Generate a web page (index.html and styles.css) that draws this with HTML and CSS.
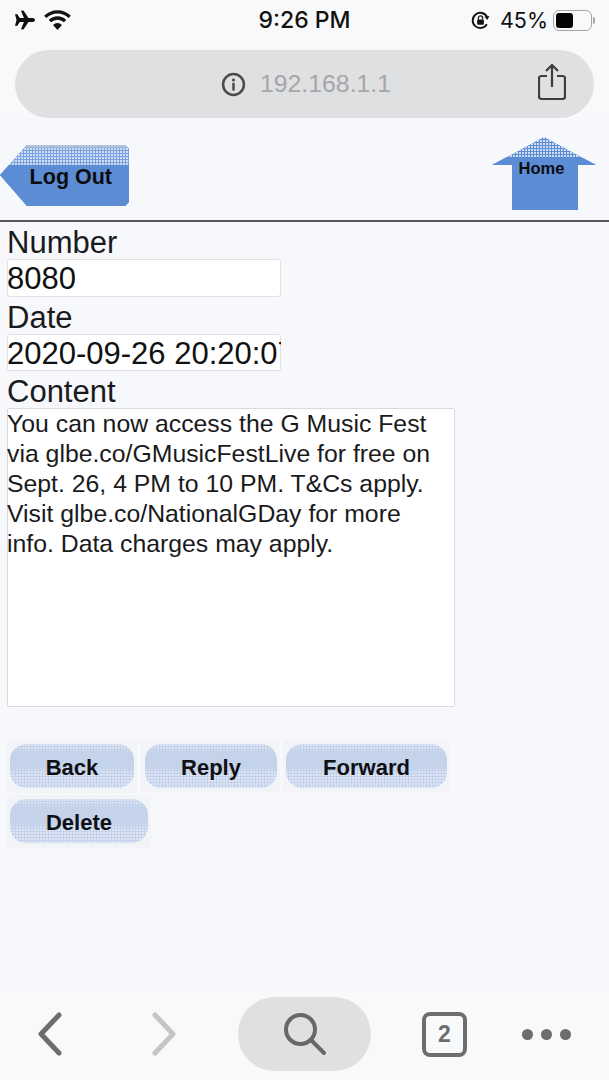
FILE: index.html
```html
<!DOCTYPE html>
<html lang="en">
<head>
<meta charset="utf-8">
<title>Message</title>
<link rel="stylesheet" href="styles.css">
</head>
<body>
<div class="phone">
  <header class="chrome">
    <div class="status">
      <div class="status-left">
        <svg class="ic-plane" viewBox="0 0 20 18"><path d="M1 3.5 L3 3.2 L5.5 7 L9.5 7 L6.6 0.3 L9 0 L13.8 7 L17.5 7 C19.5 7 20 8.4 20 9 C20 9.6 19.5 11 17.5 11 L13.8 11 L9 18 L6.6 17.7 L9.5 11 L5.5 11 L3 14.8 L1 14.5 L2.4 9 Z" fill="#111"/></svg>
        <svg class="ic-wifi" viewBox="0 0 24 18"><path d="M1 6.2 A15.5 15.5 0 0 1 23 6.2" fill="none" stroke="#111" stroke-width="3"/><path d="M5.2 10 A9.6 9.6 0 0 1 18.8 10" fill="none" stroke="#111" stroke-width="3"/><path d="M12 18 L8 13.4 A5.6 5.6 0 0 1 16 13.4 Z" fill="#111"/></svg>
      </div>
      <div class="time">9:26 PM</div>
      <div class="status-right">
        <svg class="ic-lock" viewBox="0 0 18 18"><path d="M15 12.6 A7.2 7.2 0 1 1 15.2 5.6" fill="none" stroke="#111" stroke-width="1.8"/><path d="M12.8 5 L17.6 5 L15.2 8.6 Z" fill="#111"/><rect x="5.8" y="8" width="6.4" height="5" rx="1" fill="#111"/><path d="M7 8 V6.6 A2 2 0 0 1 11 6.6 V8" fill="none" stroke="#111" stroke-width="1.2"/></svg>
        <span class="pct">45%</span>
        <div class="battery"><div class="battery-fill"></div></div>
        <div class="battery-cap"></div>
      </div>
    </div>
    <div class="url">
      <div class="url-center">
        <svg class="ic-info" viewBox="0 0 24 24"><circle cx="12" cy="12" r="10" fill="none" stroke="#4b4b4d" stroke-width="2.4"/><rect x="10.8" y="10.4" width="2.4" height="7.4" fill="#4b4b4d"/><rect x="10.7" y="6.4" width="2.6" height="2.6" fill="#4b4b4d"/></svg>
        <span class="url-text">192.168.1.1</span>
      </div>
      <svg class="ic-share" viewBox="0 0 28 38"><path d="M9 13 H3.5 A2.5 2.5 0 0 0 1 15.5 V33.5 A2.5 2.5 0 0 0 3.5 36 H24.5 A2.5 2.5 0 0 0 27 33.5 V15.5 A2.5 2.5 0 0 0 24.5 13 H19" fill="none" stroke="#3c3c3e" stroke-width="2.2"/><path d="M14 24 V2.5 M8 8 L14 2 L20 8" fill="none" stroke="#3c3c3e" stroke-width="2.2"/></svg>
    </div>
  </header>

  <nav class="topnav">
    <a class="logout"><span>Log Out</span></a>
    <a class="home"><span>Home</span></a>
  </nav>

  <main class="form">
    <div class="label">Number</div>
    <div class="field">8080</div>
    <div class="label">Date</div>
    <div class="field">2020-09-26 20:20:07</div>
    <div class="label">Content</div>
    <div class="textarea">You can now access the G Music Fest via glbe.co/GMusicFestLive for free on Sept. 26, 4 PM to 10 PM. T&amp;Cs apply. Visit glbe.co/NationalGDay for more info. Data charges may apply.</div>
    <div class="actions">
      <div class="cell cell-back"><button class="btn">Back</button></div>
      <div class="cell cell-reply"><button class="btn">Reply</button></div>
      <div class="cell cell-forward"><button class="btn">Forward</button></div>
      <div class="cell cell-delete"><button class="btn">Delete</button></div>
    </div>
  </main>

  <footer class="toolbar">
    <svg class="ic-back" viewBox="0 0 24 44"><path d="M21 3 L3 22 L21 41" fill="none" stroke="#6d6d6f" stroke-width="5" stroke-linecap="round" stroke-linejoin="round"/></svg>
    <svg class="ic-fwd" viewBox="0 0 24 44"><path d="M3 3 L21 22 L3 41" fill="none" stroke="#c4c5c6" stroke-width="5" stroke-linecap="round" stroke-linejoin="round"/></svg>
    <div class="search">
      <svg class="ic-search" viewBox="0 0 44 44"><circle cx="17.5" cy="17.5" r="14.5" fill="none" stroke="#68686a" stroke-width="4"/><path d="M28 28 L41 41" fill="none" stroke="#68686a" stroke-width="4" stroke-linecap="round"/></svg>
    </div>
    <div class="tabs">2</div>
    <div class="more"><i></i><i></i><i></i></div>
  </footer>
</div>
</body>
</html>
```
FILE: styles.css
```css
* { box-sizing: border-box; }
html, body { margin: 0; padding: 0; }
body { font-family: "Liberation Sans", Arial, sans-serif; color: #111; background: #f6f8fc; }
.phone { width: 609px; height: 1080px; display: flex; flex-direction: column; overflow: hidden; }

.chrome { height: 118px; padding: 0 15px; background: #f8f9fa; display: flex; flex-direction: column; flex: none; }
.status { height: 40px; margin: 0 -1px; padding-top: 0; display: grid; grid-template-columns: 1fr auto 1fr; align-items: center; }
.status-left { display: flex; align-items: center; gap: 9px; }
.ic-plane { width: 21px; height: 20px; }
.ic-wifi { width: 27px; height: 20px; }
.time { font-size: 23px; font-weight: 500; font-family: Inter, "Liberation Sans", sans-serif; color: #111; }
.status-right { display: flex; align-items: center; justify-content: flex-end; }
.ic-lock { width: 19px; height: 19px; margin-right: 10px; }
.pct { font-size: 21.5px; font-family: Inter, "Liberation Sans", sans-serif; margin-right: 5px; }
.battery { width: 39px; height: 21px; border: 1.5px solid #a5a5a7; border-radius: 6px; padding: 2px; }
.battery-fill { width: 17px; height: 100%; background: #050505; border-radius: 3px; }
.battery-cap { width: 2px; height: 7px; background: #a5a5a7; margin-left: 1px; border-radius: 0 2px 2px 0; }

.url { margin-top: 10px; height: 68px; border-radius: 34px; background: #dfe0e2; display: flex; align-items: center; position: relative; justify-content: center; padding-left: 3px; }
.url-center { display: flex; align-items: center; gap: 14px; }
.ic-info { width: 25px; height: 25px; }
.url-text { font-size: 24.8px; color: #a5a6a8; }
.ic-share { position: absolute; right: 28px; top: 13px; width: 28px; height: 38px; }

.topnav { height: 104px; border-bottom: 2px solid #58585c; display: flex; justify-content: space-between; align-items: flex-start; padding-right: 13px; flex: none; }
.logout { margin-top: 27px; width: 129px; height: 61px; display: flex; align-items: center; justify-content: flex-end; padding: 3px 17px 0 0; font-size: 21.5px; font-weight: 700; color: #0c0c10;
  clip-path: polygon(27px 0, 125px 0, 129px 4px, 129px 57px, 125px 61px, 27px 61px, 0 30px);
  background-color: #5c8cd4;
  background-image:
    linear-gradient(#b4c2d8 0, #b4c2d8 2px, transparent 3px),
    linear-gradient(transparent 0, transparent 20px, #5c8cd4 20px),
    radial-gradient(circle at 1px 1px, #cfdcf1 0.8px, transparent 1.2px),
    linear-gradient(#7aa2de, #7aa2de);
  background-size: auto, auto, 3px 3px, auto; }
.home { margin-top: 19px; width: 104px; height: 73px; display: flex; justify-content: center; padding: 22px 5px 0 0; font-size: 16.5px; font-weight: 700; color: #0c0c10;
  clip-path: polygon(52px 0, 104px 28px, 86px 28px, 86px 73px, 20px 73px, 20px 28px, 0 28px);
  background-color: #5c8cd4;
  background-image:
    linear-gradient(transparent 0, transparent 21px, #5c8cd4 21px),
    radial-gradient(circle at 1px 1px, #cfdcf1 0.8px, transparent 1.2px);
  background-size: auto, 3px 3px; }

.form { flex: 1; padding: 0 7px; background: #f6f8fc; }
.label { font-size: 31px; line-height: 37px; height: 37px; padding-top: 2px; color: #1a1a1c; }
.field { width: 274px; height: 37.5px; background: #fff; box-shadow: inset 0 0 0 1px #e0e1e4; border-radius: 3px; font-size: 31px; line-height: 39px; overflow: hidden; white-space: nowrap; color: #111; }
.textarea { width: 448px; height: 299px; background: #fff; box-shadow: inset 0 0 0 1px #d9dadd; border-radius: 2px; font-size: 24.8px; line-height: 30px; padding: 1px 6px 0 0; color: #1a1a1c; }

.actions { margin-top: 33px; display: flex; flex-wrap: wrap; width: 450px; gap: 2px 3px; }
.cell { height: 53px; padding: 4px 3px; background: #f2f4f8; }
.cell-back { width: 130px; }
.cell-reply { width: 140px; padding-left: 5px; }
.cell-forward { width: 167px; }
.cell-delete { width: 144px; }
.btn { display: block; width: 100%; height: 44px; padding: 4px 0 0; border: 0; border-radius: 16px; font-family: inherit; font-size: 22px; font-weight: 700; color: #0f0f14;
  background-color: #c3d2ea;
  background-image:
    linear-gradient(transparent 0, transparent 3px, #c4d3ea 8px, #c4d3ea 23px, transparent 30px),
    radial-gradient(circle at 1px 1px, #dfe7f5 0.8px, transparent 1.2px);
  background-size: auto, 3px 3px; }

.toolbar { height: 90px; flex: none; margin-top: auto; background: #f8f9fa; display: flex; align-items: center; padding: 0 0 0 38px; }
.ic-back { width: 24px; height: 46px; margin-top: -2px; }
.ic-fwd { width: 24px; height: 46px; margin-left: 90px; margin-top: -2px; }
.search { margin-left: 62px; width: 133px; height: 74px; border-radius: 37px; background: #dfe0e2; display: flex; align-items: center; justify-content: center; margin-top: -2px; }
.ic-search { width: 44px; height: 46px; }
.tabs { margin-left: 51px; width: 45px; height: 45px; border: 4px solid #6d6d6f; border-radius: 8px; font-size: 23px; font-weight: 700; color: #6d6d6f; display: flex; align-items: center; justify-content: center; margin-top: -2px; }
.more { margin-left: 55px; display: flex; gap: 8px; margin-top: -2px; }
.more i { width: 11px; height: 11px; border-radius: 50%; background: #6d6d6f; display: block; }
```
